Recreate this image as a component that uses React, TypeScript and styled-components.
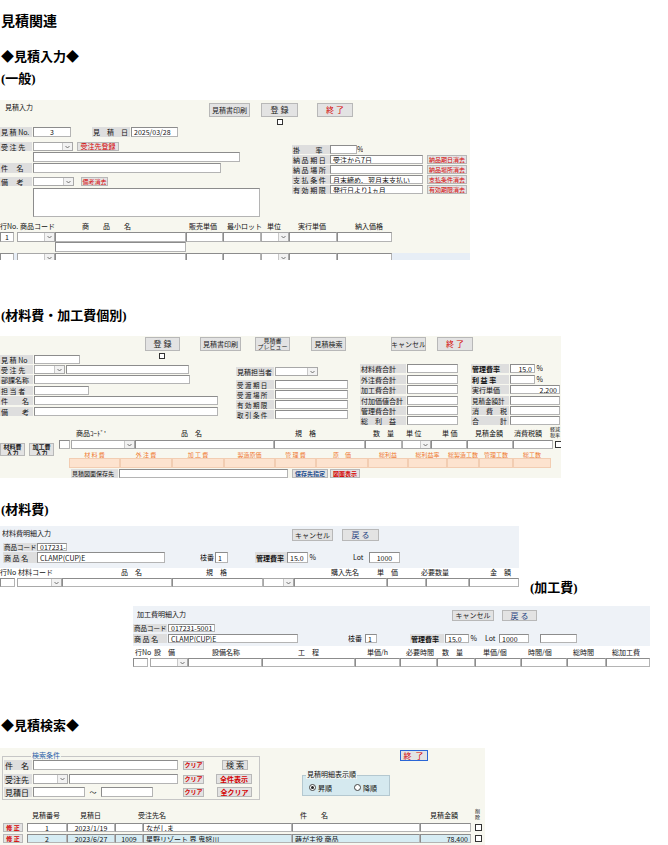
import React from "react";
import styled, { createGlobalStyle } from "styled-components";

const Global = createGlobalStyle`
  html, body { margin: 0; padding: 0; background: #fff; }
  body { font-family: "Noto Sans CJK JP", "Noto Sans", sans-serif; font-size: 7px; color: #111; width: 668px; overflow: hidden; }
`;

const Page = styled.div`display: flex; flex-direction: column; align-items: flex-start;`;

const Heading = styled.div<{ $mt: number; $size: number; $ml?: number }>`
  margin-top: ${p => p.$mt}px; margin-left: ${p => p.$ml ?? 1}px;
  font-family: "Liberation Serif", "Noto Sans CJK JP", serif; font-weight: 700;
  font-size: ${p => p.$size}px; line-height: 16px; height: 16px; white-space: nowrap; color: #000;
`;

const Panel = styled.div<{ $w: number; $h: number; $bg: string; $ml?: number; $mt: number }>`
  width: ${p => p.$w}px; height: ${p => p.$h}px; background: ${p => p.$bg};
  margin-left: ${p => p.$ml ?? 0}px; margin-top: ${p => p.$mt}px;
  display: flex; flex-direction: column; overflow: hidden; flex-shrink: 0;
`;

const Row = styled.div<{ $mt?: number; $h: number; $ml?: number; $bg?: string; $end?: boolean }>`
  display: flex; flex-shrink: 0; margin-top: ${p => p.$mt ?? 0}px; margin-left: ${p => p.$ml ?? 0}px;
  height: ${p => p.$h}px; align-items: ${p => (p.$end ? "flex-end" : "stretch")};
  background: ${p => p.$bg ?? "transparent"};
`;

const Col = styled.div<{ $w?: number; $mt?: number }>`
  display: flex; flex-direction: column; flex-shrink: 0;
  width: ${p => (p.$w ? p.$w + "px" : "auto")}; margin-top: ${p => p.$mt ?? 0}px;
`;

const Flex = styled.div<{ $mt?: number }>`display: flex; align-items: flex-start; margin-top: ${p => p.$mt ?? 0}px;`;

const Gap = styled.span<{ $w: number }>`width: ${p => p.$w}px; flex-shrink: 0;`;

const Txt = styled.span<{ $w?: number; $center?: boolean; $top?: boolean; $fs?: number }>`
  width: ${p => (p.$w ? p.$w + "px" : "auto")}; flex-shrink: 0; display: flex;
  align-items: ${p => (p.$top ? "flex-start" : "center")}; justify-content: ${p => (p.$center ? "center" : "flex-start")};
  white-space: nowrap; font-size: ${p => p.$fs ?? 7}px; line-height: 9px; overflow: hidden;
`;

const Lbl = styled.span<{ $w: number; $bold?: boolean; $bg?: string; $fs?: number }>`
  width: ${p => p.$w}px; flex-shrink: 0; display: flex; align-items: center; padding-left: 1px; box-sizing: border-box;
  background: ${p => p.$bg ?? "#dedede"}; white-space: nowrap; font-size: ${p => p.$fs ?? 7}px; overflow: hidden;
  font-weight: ${p => (p.$bold ? 700 : 400)};
`;

const Input = styled.span<{ $w: number; $align?: string; $bg?: string }>`
  width: ${p => p.$w}px; flex-shrink: 0; box-sizing: border-box; display: flex; align-items: center;
  justify-content: ${p => p.$align ?? "flex-start"}; padding: 0 2px; overflow: hidden; white-space: nowrap;
  background: ${p => p.$bg ?? "#fff"}; border: 1px solid #b4b4b4; border-top-color: #8c8c8c; border-left-color: #8c8c8c;
  font-size: 7px;
`;

const SelectBox = styled.span<{ $w: number }>`
  width: ${p => p.$w}px; flex-shrink: 0; box-sizing: border-box; display: flex; justify-content: flex-end;
  background: #fff; border: 1px solid #a8a8a8;
`;
const Arrow = styled.span`
  width: 9px; border-left: 1px solid #c8c8c8; background: #f2f2f2; display: flex; align-items: center; justify-content: center;
`;

const Btn = styled.span<{ $w: number; $h?: number; $color?: string; $bold?: boolean; $fs?: number; $border?: string; $self?: string }>`
  width: ${p => p.$w}px; ${p => (p.$h ? `height: ${p.$h}px;` : "")} flex-shrink: 0; box-sizing: border-box;
  display: flex; align-items: center; justify-content: center; text-align: center;
  background: #e3e3e3; border: 1px solid ${p => p.$border ?? "#b8b8b8"};
  color: ${p => p.$color ?? "#222"}; font-weight: ${p => (p.$bold ? 700 : 400)};
  font-size: ${p => p.$fs ?? 8}px; line-height: ${p => p.$fs ?? 8}px; white-space: pre; overflow: hidden;
  align-self: ${p => p.$self ?? "stretch"}; position: relative;
`;

const Check = styled.span<{ $s?: number }>`
  width: ${p => p.$s ?? 6}px; height: ${p => p.$s ?? 6}px; box-sizing: border-box; flex-shrink: 0;
  border: 1px solid #333; background: #fff; align-self: center;
`;

const UnderCheck = styled(Check)`position: absolute; left: 14px; top: 16px;`;
const BtnWrap = styled.span`position: relative; display: flex; flex-shrink: 0;`;

const Head = styled.span<{ $w: number; $two?: boolean }>`
  width: ${p => p.$w}px; flex-shrink: 0; white-space: ${p => (p.$two ? "normal" : "nowrap")};
  font-size: ${p => (p.$two ? 5 : 7)}px; line-height: ${p => (p.$two ? 6 : 9)}px; overflow: visible; word-break: break-all;
`;

const Orange = styled.span<{ $w: number }>`
  width: ${p => p.$w}px; flex-shrink: 0; text-align: center; color: #f07830; font-size: 6px; line-height: 6px; white-space: nowrap; overflow: hidden;
`;
const Peach = styled.span<{ $w: number }>`
  width: ${p => p.$w}px; flex-shrink: 0; box-sizing: border-box; background: #fde3cf; border: 1px solid #f2cdb2;
`;

const Box = styled.div<{ $w: number; $h: number; $ml: number; $mt: number; $bg?: string; $border: string }>`
  position: relative; width: ${p => p.$w}px; height: ${p => p.$h}px; margin-left: ${p => p.$ml}px; margin-top: ${p => p.$mt}px;
  box-sizing: border-box; border: 1px solid ${p => p.$border}; background: ${p => p.$bg ?? "transparent"};
  display: flex; flex-direction: column; flex-shrink: 0;
`;
const Legend = styled.span<{ $left: number; $color: string; $bg: string }>`
  position: absolute; top: -6px; left: ${p => p.$left}px; padding: 0 1px; background: ${p => p.$bg};
  color: ${p => p.$color}; font-size: 7px; line-height: 9px; white-space: nowrap;
`;
const Radio = styled.span<{ $on?: boolean }>`
  width: 7px; height: 7px; border-radius: 50%; border: 1px solid #444; background: #fff; box-sizing: border-box;
  display: flex; align-items: center; justify-content: center; margin-right: 2px; flex-shrink: 0;
  &::after { content: ""; width: 3px; height: 3px; border-radius: 50%; background: ${p => (p.$on ? "#222" : "transparent")}; }
`;
const RadioLbl = styled.span`display: flex; align-items: center; font-size: 7px; white-space: nowrap;`;
const RedText = styled.span`color: #d40000; letter-spacing: 1px; font-size: 8px;`;

const Sel = ({ w }: { w: number }) => (
  <SelectBox $w={w}>
    <Arrow>
      <svg width="5" height="4" viewBox="0 0 5 4"><path d="M0.5 1 L2.5 3 L4.5 1" fill="none" stroke="#555" strokeWidth="0.8" /></svg>
    </Arrow>
  </SelectBox>
);

const Heads = ({ starts, labels, width, two }: { starts: number[]; labels: string[]; width: number; two?: number }) => (
  <>
    {starts.map((s, i) => (
      <React.Fragment key={i}>
        {i === 0 && <Gap $w={s} />}
        <Head $w={(i + 1 < starts.length ? starts[i + 1] : width) - s} $two={two === i}>{labels[i]}</Head>
      </React.Fragment>
    ))}
  </>
);

const RED = "#d40000";
const BEIGE = "#f7f7ef";
const BLUEGRAY = "#eef2f7";

const CostCells = [51, 52, 52, 51, 41, 52, 40, 39, 32, 34, 38];
const CostLabels = ["材 料 費", "外 注 費", "加 工 費", "製造原価", "管 理 費", "原　価", "総利益", "総利益率", "総製造工数", "管理工数", "総工数"];

export default function App() {
  return (
    <Page>
      <Global />
      <Heading $mt={14} $size={14}>見積関連</Heading>
      <Heading $mt={19} $size={13}>◆見積入力◆</Heading>
      <Heading $mt={6} $size={13}>(一般)</Heading>

      {/* Panel 1 */}
      <Panel $w={470} $h={160} $bg={BEIGE} $mt={13}>
        <Row $mt={3} $h={14}>
          <Gap $w={5} />
          <Txt $w={204} $top>見積入力</Txt>
          <Btn $w={41} $fs={7}>見積書印刷</Btn>
          <Gap $w={11} />
          <Btn $w={37}>登 録</Btn>
          <Gap $w={19} />
          <Btn $w={36} $color={RED}>終 了</Btn>
        </Row>
        <Row $mt={2} $h={6}><Gap $w={277} /><Check /></Row>
        <Flex>
          <Col $w={292}>
            <Row $mt={2} $h={10}>
              <Lbl $w={32}>見 積 No.</Lbl><Gap $w={1} /><Input $w={38} $align="center">3</Input>
              <Gap $w={21} /><Lbl $w={38}>見　積　日</Lbl><Gap $w={1} /><Input $w={47}>2025/03/28</Input>
            </Row>
            <Row $mt={5} $h={9}>
              <Lbl $w={32}>受 注 先</Lbl><Gap $w={1} /><Sel w={40} /><Gap $w={4} />
              <Btn $w={42} $color={RED} $fs={7}>受注先登録</Btn>
            </Row>
            <Row $mt={1} $h={10}><Gap $w={33} /><Input $w={207} /></Row>
            <Row $mt={1} $h={10}><Lbl $w={32}>件　 名</Lbl><Gap $w={1} /><Input $w={188} /></Row>
            <Row $mt={4} $h={9}>
              <Lbl $w={32}>備　 考</Lbl><Gap $w={1} /><Sel w={41} /><Gap $w={7} />
              <Btn $w={27} $color={RED} $fs={6}>備考消去</Btn>
            </Row>
            <Row $mt={2} $h={29}><Gap $w={33} /><Input $w={227} /></Row>
          </Col>
          <Col $mt={20}>
            <Row $h={9}><Lbl $w={38}>掛　　 率</Lbl><Input $w={27} /><Txt>%</Txt></Row>
            {[
              ["納 品 期 日", "受注から7日", "納品期日消去"],
              ["納 品 場 所", "", "納品場所消去"],
              ["支 払 条 件", "月末締め、翌月末支払い", "支払条件消去"],
              ["有 効 期 限", "発行日より1ヵ月", "有効期限消去"],
            ].map(([l, v, b]) => (
              <Row $mt={1} $h={9} key={l}>
                <Lbl $w={38}>{l}</Lbl><Input $w={93}>{v}</Input><Gap $w={4} />
                <Btn $w={40} $color={RED} $fs={6}>{b}</Btn>
              </Row>
            ))}
          </Col>
        </Flex>
        <Row $mt={6} $h={8} $end>
          <Heads starts={[0, 20, 82, 189, 227, 267, 298, 355]} labels={["行No.", "商品コード", "商　　品　　名", "販売単価", "最小ロット", "単位", "実行単価", "納入価格"]} width={470} />
        </Row>
        <Row $mt={1} $h={10}>
          <Input $w={14} $align="center">1</Input><Gap $w={3} /><Sel w={38} /><Input $w={131} /><Input $w={37} /><Input $w={38} /><Sel w={28} /><Input $w={48} /><Input $w={55} />
        </Row>
        <Row $h={10}><Gap $w={55} /><Input $w={131} /></Row>
        <Row $mt={1} $h={10} $bg="#e7eef6">
          <Input $w={14} /><Gap $w={3} /><Sel w={38} /><Input $w={131} /><Input $w={37} /><Input $w={38} /><Sel w={28} /><Input $w={48} /><Input $w={55} />
        </Row>
      </Panel>

      <Heading $mt={48} $size={13}>(材料費・加工費個別)</Heading>

      {/* Panel 2 */}
      <Panel $w={561} $h={142} $bg={BEIGE} $mt={12}>
        <Row $mt={1} $h={14}>
          <Gap $w={145} />
          <BtnWrap><Btn $w={35}>登 録</Btn><UnderCheck /></BtnWrap>
          <Gap $w={20} /><Btn $w={41} $fs={7}>見積書印刷</Btn>
          <Gap $w={14} /><Btn $w={35} $fs={6}>{"見積書\nプレビュー"}</Btn>
          <Gap $w={21} /><Btn $w={35} $fs={7}>見積検索</Btn>
          <Gap $w={45} /><Btn $w={35} $fs={7}>キャンセル</Btn>
          <Gap $w={11} /><Btn $w={36} $color={RED}>終 了</Btn>
        </Row>
        <Flex>
          <Col $w={236}>
            <Row $mt={4} $h={9}><Lbl $w={33}>見 積 No</Lbl><Gap $w={1} /><Input $w={46} /></Row>
            <Row $mt={1} $h={9}><Lbl $w={33}>受 注 先</Lbl><Gap $w={1} /><Sel w={31} /><Gap $w={1} /><Input $w={123} /></Row>
            <Row $mt={1} $h={9}><Lbl $w={33}>部課名称</Lbl><Gap $w={1} /><Input $w={156} /></Row>
            <Row $mt={2} $h={9}><Lbl $w={33}>担 当 者</Lbl><Gap $w={1} /><Input $w={55} /></Row>
            <Row $mt={1} $h={9}><Lbl $w={33}>件　　名</Lbl><Gap $w={1} /><Input $w={184} /></Row>
            <Row $mt={2} $h={9}><Lbl $w={33}>備　　考</Lbl><Gap $w={1} /><Input $w={184} /></Row>
          </Col>
          <Col $w={124}>
            <Row $mt={16} $h={9}><Lbl $w={38}>見積担当者</Lbl><Gap $w={1} /><Sel w={43} /></Row>
            {["受渡期日", "受渡場所", "有効期限", "取引条件"].map((l, i) => (
              <Row $mt={i === 0 ? 4 : 1} $h={9} key={l}><Lbl $w={38} $fs={6.5}>{l.split("").join(" ")}</Lbl><Gap $w={1} /><Input $w={73} /></Row>
            ))}
          </Col>
          <Col $w={111} $mt={13}>
            {["材料費合計", "外注費合計", "加工費合計", "付加価値合計", "管理費合計", "総　利　益"].map((l, i) => (
              <Row $mt={[0, 2, 1, 2, 1, 1][i]} $h={9} key={l}><Lbl $w={46}>{l}</Lbl><Gap $w={1} /><Input $w={51} /></Row>
            ))}
          </Col>
          <Col $mt={13}>
            <Row $h={9}><Lbl $w={38} $bold>管理費率</Lbl><Gap $w={1} /><Input $w={25} $align="flex-end">15.0</Input><Txt>&nbsp;%</Txt></Row>
            <Row $mt={2} $h={9}><Lbl $w={38} $bold>利 益 率</Lbl><Gap $w={1} /><Input $w={25} /><Txt>&nbsp;%</Txt></Row>
            <Row $mt={1} $h={9}><Lbl $w={38}>実行単価</Lbl><Gap $w={1} /><Input $w={50} $align="flex-end">2,200</Input></Row>
            <Row $mt={2} $h={9}><Lbl $w={38} $fs={6.5}>見積金額計</Lbl><Gap $w={1} /><Input $w={50} /></Row>
            <Row $mt={1} $h={9}><Lbl $w={38}>消　費　税</Lbl><Gap $w={1} /><Input $w={50} /></Row>
            <Row $mt={1} $h={9}><Lbl $w={38}>合　　　計</Lbl><Gap $w={1} /><Input $w={50} /></Row>
          </Col>
        </Flex>
        <Flex $mt={2}>
          <Col $w={59}>
            <Row $mt={16} $h={13}>
              <Btn $w={25} $fs={6} $bold>{"材料費\n入力"}</Btn><Gap $w={4} /><Btn $w={25} $fs={6} $bold>{"加工費\n入力"}</Btn>
            </Row>
          </Col>
          <Col>
            <Row $h={11} $end>
              <Heads starts={[17, 122, 236, 314, 347, 383, 416, 455, 491]} labels={["商品ｺｰﾄﾞ'", "品　名", "規　格", "数　量", "単 位", "単 価", "見積金額", "消費税額", "軽減税率"]} width={502} two={8} />
            </Row>
            <Row $mt={2} $h={9}>
              <Input $w={11} /><Gap $w={1} /><Sel w={64} /><Input $w={139} /><Input $w={91} /><Input $w={37} /><Sel w={29} /><Input $w={36} /><Input $w={46} /><Input $w={40} /><Gap $w={2} /><Check $s={7} />
            </Row>
            <Row $mt={3} $h={6}>
              <Gap $w={10} />
              {CostCells.map((w, i) => <Orange $w={w} key={i}>{CostLabels[i]}</Orange>)}
            </Row>
            <Row $h={10}>
              <Gap $w={10} />
              {CostCells.map((w, i) => <Peach $w={w} key={i} />)}
            </Row>
            <Row $mt={1} $h={9}>
              <Gap $w={12} /><Lbl $w={47} $fs={6}>見積図面保存先</Lbl><Gap $w={1} /><Input $w={169} /><Gap $w={4} />
              <Btn $w={36} $fs={6} $color="#1f4f8f" $bold>保存先指定</Btn><Gap $w={2} />
              <Btn $w={30} $fs={6} $color={RED} $bold>図面表示</Btn>
            </Row>
          </Col>
        </Flex>
      </Panel>

      <Heading $mt={24} $size={13}>(材料費)</Heading>

      <Flex $mt={8}>
        <Col $w={519}>
          <Panel $w={519} $h={42} $bg={BLUEGRAY} $mt={0}>
            <Row $mt={3} $h={12}>
              <Gap $w={2} /><Txt $w={290} $top>材料費明細入力</Txt>
              <Btn $w={41} $fs={7}>キャンセル</Btn><Gap $w={9} /><Btn $w={37} $color="#1f3f7f">戻 る</Btn>
            </Row>
            <Row $mt={2} $h={8}><Gap $w={3} /><Lbl $w={34} $fs={6.5}>商品コード</Lbl><Input $w={30}>017231-50</Input></Row>
            <Row $mt={1} $h={11}>
              <Gap $w={3} /><Lbl $w={34}>商 品 名</Lbl><Input $w={128}>CLAMP(CUP)E</Input><Gap $w={35} />
              <Txt $w={15}>枝番</Txt><Input $w={13}>1</Input><Gap $w={27} />
              <Lbl $w={32} $bold>管理費率</Lbl><Input $w={21}>15.0</Input><Txt $w={45}>&nbsp;%</Txt>
              <Txt $w={16}>Lot</Txt><Input $w={31} $align="center">1000</Input>
            </Row>
          </Panel>
          <Row $mt={2} $h={7} $end>
            <Heads starts={[0, 18, 121, 206, 331, 377, 421, 490]} labels={["行No", "材料コード", "品　名", "規　格", "購入先名", "単　価", "必要数量", "金　額"]} width={519} />
          </Row>
          <Row $mt={1} $h={9}>
            <Input $w={15} /><Gap $w={2} /><Sel w={45} /><Input $w={110} /><Input $w={91} /><Sel w={31} /><Input $w={93} /><Input $w={39} /><Input $w={43} /><Input $w={50} />
          </Row>
        </Col>
        <Heading $mt={54} $size={13} $ml={11}>(加工費)</Heading>
      </Flex>

      <Panel $w={517} $h={40} $bg={BLUEGRAY} $ml={133} $mt={10}>
        <Row $mt={4} $h={11}>
          <Gap $w={4} /><Txt $w={315} $top>加工費明細入力</Txt>
          <Btn $w={42} $fs={7}>キャンセル</Btn><Gap $w={8} /><Btn $w={35} $color="#1f3f7f">戻 る</Btn>
        </Row>
        <Row $mt={3} $h={8}><Lbl $w={34} $fs={6.5}>商品コード</Lbl><Gap $w={1} /><Input $w={47}>017231-5001</Input></Row>
        <Row $mt={2} $h={9}>
          <Lbl $w={34}>商 品 名</Lbl><Gap $w={1} /><Input $w={130}>CLAMP(CUP)E</Input><Gap $w={50} />
          <Txt $w={17}>枝番</Txt><Input $w={12}>1</Input><Gap $w={33} />
          <Lbl $w={34} $bold>管理費率</Lbl><Gap $w={1} /><Input $w={24}>15.0</Input><Txt $w={16}>&nbsp;%</Txt>
          <Txt $w={14}>Lot</Txt><Input $w={30}>1000</Input><Gap $w={11} /><Input $w={37} />
        </Row>
      </Panel>
      <Row $mt={4} $h={7} $ml={133} $end>
        <Heads starts={[2, 21, 79, 165, 234, 273, 309, 350, 395, 440, 479]} labels={["行No", "設　備", "設備名称", "工　程", "単価/h", "必要時間", "数　量", "単価/個", "時間/個", "総時間", "総加工費"]} width={517} />
      </Row>
      <Row $mt={1} $h={9} $ml={133}>
        <Input $w={15} /><Gap $w={2} /><Sel w={38} /><Input $w={74} /><Input $w={93} /><Input $w={45} /><Input $w={37} /><Input $w={38} /><Input $w={46} /><Input $w={46} /><Input $w={39} /><Input $w={44} />
      </Row>

      <Heading $mt={51} $size={13}>◆見積検索◆</Heading>

      <Panel $w={485} $h={100} $bg={BEIGE} $mt={14}>
        <Flex>
          <Box $w={258} $h={44} $ml={2} $mt={8} $border="#c6c6c6">
            <Legend $left={28} $color="#2b5fa8" $bg={BEIGE}>検索条件</Legend>
            <Row $mt={3} $h={10}>
              <Gap $w={1} /><Lbl $w={28} $fs={8}>件　名</Lbl><Gap $w={1} /><Input $w={145} /><Gap $w={5} />
              <Btn $w={21} $h={9} $color={RED} $bold $fs={6} $self="center">クリア</Btn><Gap $w={18} />
              <Btn $w={26}>検 索</Btn>
            </Row>
            <Row $mt={4} $h={10}>
              <Gap $w={1} /><Lbl $w={28} $fs={8}>受注先</Lbl><Gap $w={1} /><Sel w={35} /><Gap $w={1} /><Input $w={109} /><Gap $w={5} />
              <Btn $w={21} $h={9} $color={RED} $bold $fs={6} $self="center">クリア</Btn><Gap $w={12} />
              <Btn $w={36} $color={RED} $bold $fs={7}>全件表示</Btn>
            </Row>
            <Row $mt={3} $h={10}>
              <Gap $w={1} /><Lbl $w={28} $fs={8}>見積日</Lbl><Gap $w={1} /><Input $w={52} /><Txt $w={16} $center>〜</Txt><Input $w={52} /><Gap $w={30} />
              <Btn $w={21} $h={9} $color={RED} $bold $fs={6} $self="center">クリア</Btn><Gap $w={13} />
              <Btn $w={35} $color={RED} $bold $fs={7}>全クリア</Btn>
            </Row>
          </Box>
          <Box $w={88} $h={21} $ml={42} $mt={27} $bg="#d5e9ef" $border="#b4c8d0">
            <Legend $left={3} $color="#111" $bg="#eef4f2">見積明細表示順</Legend>
            <Row $mt={7} $h={9}>
              <Gap $w={6} /><RadioLbl><Radio $on />昇順</RadioLbl><Gap $w={22} /><RadioLbl><Radio />降順</RadioLbl>
            </Row>
          </Box>
          <Box $w={28} $h={11} $ml={10} $mt={2} $border="#2a66d6" $bg="#e3e3e3">
            <Txt $center $w={26}><RedText>終 了</RedText></Txt>
          </Box>
        </Flex>
        <Row $mt={6} $h={14} $end>
          <Heads starts={[32, 80, 138, 300, 430, 475]} labels={["見積番号", "見積日", "受注先名", "件　　名", "見積金額", "削除"]} width={483} two={5} />
        </Row>
        {[
          { bg: "#fff", v: ["1", "2023/1/19", "", "ながしま", "", ""] },
          { bg: "#d6ecf3", v: ["2", "2023/6/27", "1009", "星野リゾート 界 鬼怒川", "蒔が主役 商品", "78,400"] },
        ].map((r, i) => (
          <Row $mt={i === 0 ? 3 : 2} $h={9} key={i}>
            <Gap $w={3} /><Btn $w={20} $color={RED} $bold $fs={6}>修 正</Btn><Gap $w={4} />
            <Input $w={40} $align="center" $bg={r.bg}>{r.v[0]}</Input>
            <Input $w={48} $align="center" $bg={r.bg}>{r.v[1]}</Input>
            <Input $w={28} $align="center" $bg={r.bg}>{r.v[2]}</Input>
            <Input $w={149} $bg={r.bg}>{r.v[3]}</Input>
            <Input $w={128} $bg={r.bg}>{r.v[4]}</Input>
            <Input $w={51} $align="flex-end" $bg={r.bg}>{r.v[5]}</Input>
            <Gap $w={4} /><Check $s={7} />
          </Row>
        ))}
      </Panel>
    </Page>
  );
}
